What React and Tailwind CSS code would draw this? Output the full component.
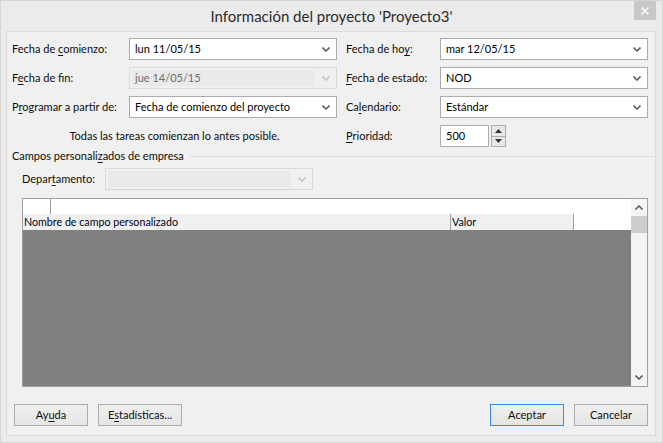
import React from "react";

const font = { fontFamily: 'Lato, "Noto Sans", "Liberation Sans", sans-serif' };

function Chevron({ disabled }) {
  return (
    <svg width="8" height="5" viewBox="0 0 8 5" className="shrink-0">
      <path
        d="M0.5 0.5 L4 4 L7.5 0.5"
        fill="none"
        stroke={disabled ? "#c4c4c4" : "#606060"}
        strokeWidth="1.6"
      />
    </svg>
  );
}

function Combo({ value, disabled, width = "w-[208px]" }) {
  return (
    <div
      className={`${width} h-[22px] flex items-center justify-between pl-[5px] pr-[6px] border ${
        disabled
          ? "border-[#d9d9d9] bg-[#f0f0f0] text-[#6d6d6d]"
          : "border-[#acacac] bg-white text-[#000]"
      }`}
    >
      <span className={disabled ? "bg-[#e9e9e9] flex-1 mr-[8px] -ml-[3px] pl-[3px] h-[16px] leading-[16px]" : ""}>
        {value}
      </span>
      <Chevron disabled={disabled} />
    </div>
  );
}

function U({ children }) {
  return <span className="underline underline-offset-2">{children}</span>;
}

function Label({ children, width }) {
  return <div className={`${width} shrink-0 whitespace-nowrap text-[#0d0d0d]`}>{children}</div>;
}

function Btn({ children, primary }) {
  return (
    <div
      className={`h-[22px] flex items-center justify-center border bg-gradient-to-b from-[#efefef] to-[#e5e5e5] text-[#0d0d0d] ${
        primary ? "border-[#3c8ae0] w-[74px]" : "border-[#acacac]"
      }`}
    >
      {children}
    </div>
  );
}

export default function App() {
  return (
    <div
      className="w-[663px] h-[443px] bg-[#ebebeb] border border-[#d6d6d6] flex flex-col relative text-[11px] overflow-hidden"
      style={font}
    >
      {/* barra de título */}
      <div className="h-[30px] shrink-0 flex items-center justify-center text-[15px] text-[#2b2b2b] pt-[1px] whitespace-nowrap">
        Información del proyecto 'Proyecto3'
      </div>
      <div className="absolute top-0 right-[6px] w-[22px] h-[19px] bg-[#c7c7c7] flex items-center justify-center">
        <svg width="8" height="8" viewBox="0 0 8 8">
          <path d="M0.5 0.5 L7.5 7.5 M7.5 0.5 L0.5 7.5" stroke="#fff" strokeWidth="1.5" />
        </svg>
      </div>

      {/* área de cliente */}
      <div className="ml-[5px] w-[650px] h-[405px] border border-[#dadada] bg-[#f0f0f0] flex flex-col">
        {/* formulario */}
        <div className="pl-[5px] pt-[6px] flex flex-col gap-[7px]">
          <div className="flex items-center h-[22px]">
            <Label width="w-[117px]">
              Fecha de <U>c</U>omienzo:
            </Label>
            <Combo value="lun 11/05/15" />
            <div className="w-[9px]" />
            <Label width="w-[94px]">
              Fecha de ho<U>y</U>:
            </Label>
            <Combo value="mar 12/05/15" />
          </div>
          <div className="flex items-center h-[22px]">
            <Label width="w-[117px]">
              F<U>e</U>cha de fin:
            </Label>
            <Combo value="jue 14/05/15" disabled />
            <div className="w-[9px]" />
            <Label width="w-[94px]">
              <U>F</U>echa de estado:
            </Label>
            <Combo value="NOD" />
          </div>
          <div className="flex items-center h-[22px]">
            <Label width="w-[117px]">
              P<U>r</U>ogramar a partir de:
            </Label>
            <Combo value="Fecha de comienzo del proyecto" />
            <div className="w-[9px]" />
            <Label width="w-[94px]">
              Ca<U>l</U>endario:
            </Label>
            <Combo value="Estándar" />
          </div>
          <div className="flex items-center h-[22px]">
            <div className="w-[325px] text-center text-[#0d0d0d]">
              Todas las tareas comienzan lo antes posible.
            </div>
            <div className="w-[9px]" />
            <Label width="w-[94px]">
              <U>P</U>rioridad:
            </Label>
            <div className="w-[49px] h-[22px] border border-[#acacac] bg-white flex items-center pl-[5px]">
              500
            </div>
            <div className="ml-[2px] w-[15px] h-[22px] flex flex-col">
              <div className="flex-1 border border-[#acacac] bg-[#e8e8e8] flex items-center justify-center">
                <svg width="7" height="4" viewBox="0 0 7 4">
                  <path d="M0 4 L3.5 0 L7 4 Z" fill="#333" />
                </svg>
              </div>
              <div className="flex-1 border border-t-0 border-[#acacac] bg-[#e8e8e8] flex items-center justify-center">
                <svg width="7" height="4" viewBox="0 0 7 4">
                  <path d="M0 0 L3.5 4 L7 0 Z" fill="#333" />
                </svg>
              </div>
            </div>
          </div>
        </div>

        {/* grupo */}
        <div className="mt-[2px] h-[15px] pl-[5px] flex items-center text-[#0d0d0d]">
          <span className="whitespace-nowrap">
            Campos personali<U>z</U>ados de empresa
          </span>
          <div className="flex-1 ml-[6px] border-t border-[#dcdcdc]" />
        </div>

        <div className="mt-[4px] pl-[15px] flex items-center h-[22px]">
          <Label width="w-[83px]">
            Depar<U>t</U>amento:
          </Label>
          <Combo value="" disabled />
        </div>

        {/* cuadrícula */}
        <div className="mt-[8px] ml-[15px] w-[626px] h-[189px] border border-[#a0a0a0] bg-white flex">
          <div className="flex-1 flex flex-col">
            <div className="h-[15px] flex">
              <div className="w-[28px] border-r border-[#a0a0a0]" />
            </div>
            <div className="h-[16px] flex text-[#000018] text-[10.7px] leading-[16px]">
              <div className="w-[428px] bg-[#f0f0f0] border-r border-[#a0a0a0] pl-[1px]">
                Nombre de campo personalizado
              </div>
              <div className="w-[123px] bg-[#f0f0f0] border-r border-[#a0a0a0] pl-[1px]">Valor</div>
            </div>
            <div className="flex-1 bg-[#808080]" />
          </div>
          <div className="w-[16px] flex flex-col bg-[#f4f4f4]">
            <div className="h-[17px] flex items-center justify-center">
              <svg width="8" height="5" viewBox="0 0 8 5">
                <path d="M0.5 4.5 L4 1 L7.5 4.5" fill="none" stroke="#606060" strokeWidth="1.6" />
              </svg>
            </div>
            <div className="h-[17px] bg-[#cdcdcd]" />
            <div className="flex-1" />
            <div className="h-[17px] flex items-center justify-center">
              <Chevron />
            </div>
          </div>
        </div>

        {/* botones */}
        <div className="mt-[17px] pl-[7px] pr-[7px] flex items-center">
          <div className="w-[74px]">
            <Btn>
              Ay<U>u</U>da
            </Btn>
          </div>
          <div className="w-[84px] ml-[10px]">
            <Btn>
              E<U>s</U>tadísticas...
            </Btn>
          </div>
          <div className="flex-1" />
          <Btn primary>Aceptar</Btn>
          <div className="w-[74px] ml-[10px]">
            <Btn>Cancelar</Btn>
          </div>
        </div>
      </div>
    </div>
  );
}
